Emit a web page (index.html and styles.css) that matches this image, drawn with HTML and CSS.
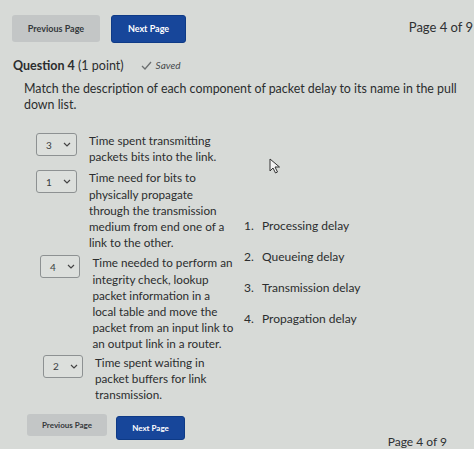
FILE: index.html
```html
<!DOCTYPE html>
<html>
<head>
<meta charset="utf-8">
<link rel="stylesheet" href="styles.css">
</head>
<body>
<div class="page">
  <div class="topbar">
    <button class="btn btn-prev">Previous Page</button>
    <button class="btn btn-next">Next Page</button>
    <div class="pageno top">Page 4 of 9</div>
  </div>

  <div class="qhead">
    <span class="qtitle"><b>Question 4</b> (1 point)</span>
    <span class="saved">
      <svg width="11" height="9" viewBox="0 0 11 9"><path d="M1 5 L4 8 L10 1" fill="none" stroke="#6b6f70" stroke-width="1.3"/></svg>
      <i>Saved</i>
    </span>
  </div>

  <p class="instr">Match the description of each component of packet delay to its name in the pull down list.</p>

  <div class="match">
    <div class="left">
      <div class="row r1">
        <div class="sel"><span>3</span><svg width="8" height="5" viewBox="0 0 8 5"><path d="M1 1 L4 4 L7 1" fill="none" stroke="#444" stroke-width="1.2"/></svg></div>
        <div class="desc">Time spent transmitting packets bits into the link.</div>
      </div>
      <div class="row r2">
        <div class="sel"><span>1</span><svg width="8" height="5" viewBox="0 0 8 5"><path d="M1 1 L4 4 L7 1" fill="none" stroke="#444" stroke-width="1.2"/></svg></div>
        <div class="desc">Time need for bits to physically propagate through the transmission medium from end one of a link to the other.</div>
      </div>
      <div class="row r3">
        <div class="sel"><span>4</span><svg width="8" height="5" viewBox="0 0 8 5"><path d="M1 1 L4 4 L7 1" fill="none" stroke="#444" stroke-width="1.2"/></svg></div>
        <div class="desc">Time needed to perform an integrity check, lookup packet information in a local table and move the packet from an input link to an output link in a router.</div>
      </div>
      <div class="row r4">
        <div class="sel"><span>2</span><svg width="8" height="5" viewBox="0 0 8 5"><path d="M1 1 L4 4 L7 1" fill="none" stroke="#444" stroke-width="1.2"/></svg></div>
        <div class="desc">Time spent waiting in packet buffers for link transmission.</div>
      </div>
    </div>
    <ol class="choices">
      <li><span class="num">1.</span>Processing delay</li>
      <li><span class="num">2.</span>Queueing delay</li>
      <li><span class="num">3.</span>Transmission delay</li>
      <li><span class="num">4.</span>Propagation delay</li>
    </ol>
  </div>

  <div class="bottombar">
    <button class="btn btn-prev small">Previous Page</button>
    <button class="btn btn-next small">Next Page</button>
    <div class="pageno bottom">Page 4 of 9</div>
  </div>

  <svg class="cursor" width="12" height="16" viewBox="0 0 12 16"><path d="M1 1 L1 13 L4 10 L6.5 15 L8.5 14 L6 9 L10.5 9 Z" fill="#f4f4f4" stroke="#333" stroke-width="1"/></svg>
</div>
</body>
</html>
```

FILE: styles.css
```css
html, body {
  margin: 0;
  padding: 0;
}
body {
  background: #d7dad7;
  font-family: Lato, "Open Sans", sans-serif;
  color: #2b2d2e;
  width: 474px;
  height: 449px;
  overflow: hidden;
}
.page {
  position: relative;
  width: 474px;
  height: 449px;
}
.topbar {
  display: flex;
  align-items: center;
  padding: 15px 0 0 12px;
  height: 27px;
}
.btn {
  border: none;
  border-radius: 3px;
  font-family: Lato, sans-serif;
  font-weight: bold;
  font-size: 9px;
  padding: 0;
}
.btn-prev {
  background: #c3c6c6;
  color: #34383b;
  width: 88px;
  height: 27px;
}
.btn-next {
  background: #17469a;
  color: #ffffff;
  width: 75px;
  height: 28px;
  margin-left: 11px;
  border: 1px solid #0e3a86;
}
.pageno {
  font-size: 13px;
  color: #2e3032;
  margin-left: auto;
  white-space: nowrap;
}
.pageno.top {
  margin-top: -4px;
  margin-right: 1px;
}
.qhead {
  display: flex;
  align-items: center;
  padding: 15px 0 0 13px;
  height: 16px;
}
.qtitle {
  font-size: 12.5px;
}
.saved {
  display: flex;
  align-items: center;
  gap: 4px;
  margin-left: 17px;
  font-size: 10px;
  color: #45494b;
}
.instr {
  margin: 8px 0 0 24px;
  width: 445px;
  font-size: 12.4px;
  line-height: 16px;
}
.match {
  display: flex;
  align-items: center;
  margin-top: 19px;
}
.left {
  display: flex;
  flex-direction: column;
  padding-left: 36px;
  width: 200px;
}
.row {
  display: flex;
  align-items: flex-start;
}
.r2 { margin-top: 5px; }
.r3 { margin-top: 4px; margin-left: 4px; }
.r4 { margin-top: 2px; margin-left: 7px; }
.sel {
  width: 41px;
  height: 23px;
  border: 1px solid #8d9192;
  border-radius: 3px;
  background: #dcdfdc;
  display: flex;
  align-items: center;
  gap: 11px;
  padding-left: 9px;
  box-sizing: border-box;
  font-size: 10px;
  color: #3a3d3f;
  margin-top: 1px;
}
.desc {
  margin-left: 12px;
  width: 146px;
  font-size: 11.7px;
  line-height: 16.2px;
  color: #2b2d2e;
}
.choices {
  list-style: none;
  margin: 10px 0 0 8px;
  padding: 0;
  font-size: 12px;
  display: flex;
  flex-direction: column;
  gap: 16px;
}
.choices li {
  display: flex;
  line-height: 15px;
}
.num {
  width: 18px;
}
.bottombar {
  display: flex;
  align-items: flex-start;
  padding: 12px 0 0 27px;
  height: 26px;
}
.btn.small.btn-prev {
  width: 80px;
  height: 22px;
  font-size: 8px;
}
.btn.small.btn-next {
  width: 69px;
  height: 24px;
  margin-left: 9px;
  margin-top: 2px;
  font-size: 8px;
}
.pageno.bottom {
  font-size: 12px;
  margin-right: 27px;
  margin-top: 20px;
}
.cursor {
  position: absolute;
  left: 269px;
  top: 158px;
}
```
